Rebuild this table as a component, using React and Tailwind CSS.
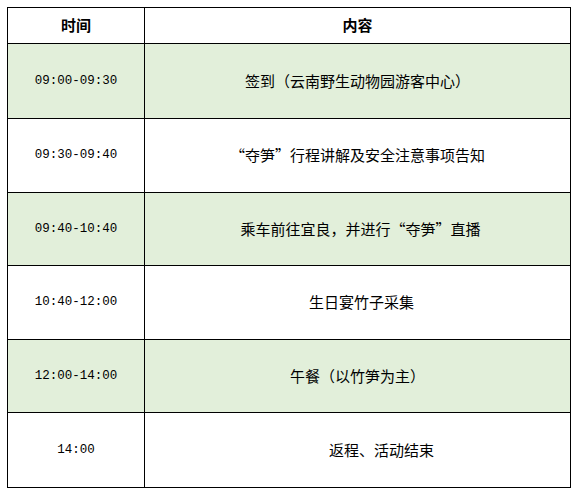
export default function App() {
  const rows = [
    { t: "09:00-09:30", c: "签到（云南野生动物园游客中心）", g: true, h: "h-[75px]", p: "" },
    { t: "09:30-09:40", c: "“夺笋”行程讲解及安全注意事项告知", g: false, h: "h-[74px]", p: "" },
    { t: "09:40-10:40", c: "乘车前往宜良，并进行“夺笋”直播", g: true, h: "h-[73px]", p: "pl-[6px]" },
    { t: "10:40-12:00", c: "生日宴竹子采集", g: false, h: "h-[74px]", p: "pl-[8px]" },
    { t: "12:00-14:00", c: "午餐（以竹笋为主）", g: true, h: "h-[73px]", p: "" },
    { t: "14:00", c: "返程、活动结束", g: false, h: "h-[74px]", p: "pl-[48px]" },
  ];
  const cjk = "font-['Noto_Sans_CJK_SC',sans-serif]";
  return (
    <div className="w-[577px] h-[494px] bg-white pl-[7px] pt-[7px] text-black">
      <div className="w-[564px] border border-black">
        <div className="flex h-[36px] border-b border-black">
          <div className={`w-[137px] border-r border-black flex items-center justify-center font-bold text-[15px] ${cjk}`}>时间</div>
          <div className={`flex-1 flex items-center justify-center font-bold text-[15px] ${cjk}`}>内容</div>
        </div>
        {rows.map((r, i) => (
          <div
            key={i}
            className={`flex ${r.h} ${i < rows.length - 1 ? "border-b border-black" : ""} ${r.g ? "bg-[#e2efda]" : "bg-white"}`}
          >
            <div className="w-[137px] border-r border-black flex items-center justify-center font-['Liberation_Mono',monospace] text-[12.5px]">
              {r.t}
            </div>
            <div className={`flex-1 flex items-center justify-center text-[15px] ${r.p} ${cjk}`}>{r.c}</div>
          </div>
        ))}
      </div>
    </div>
  );
}
